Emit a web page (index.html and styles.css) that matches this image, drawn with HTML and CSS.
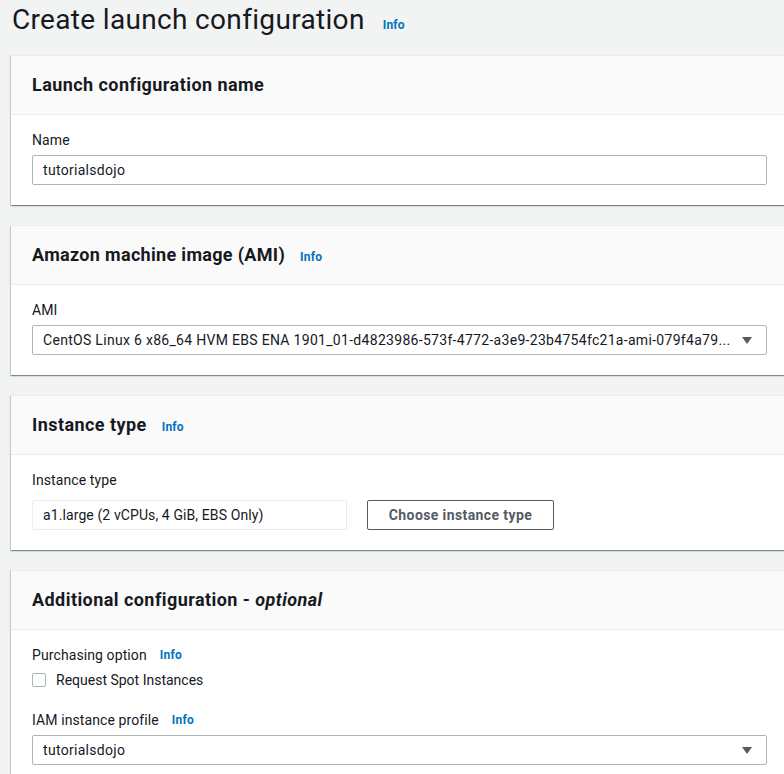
FILE: index.html
```html
<!DOCTYPE html>
<html>
<head>
<meta charset="utf-8">
<link rel="stylesheet" href="styles.css">
</head>
<body>
<div class="page">
  <div class="title-row">
    <h1 class="title">Create launch configuration</h1>
    <a class="info info-title">Info</a>
  </div>

  <section class="card">
    <div class="card-header"><h2 class="card-title">Launch configuration name</h2></div>
    <div class="card-body">
      <div class="label">Name</div>
      <div class="input">tutorialsdojo</div>
    </div>
  </section>

  <section class="card">
    <div class="card-header"><h2 class="card-title card-title-ami">Amazon machine image (AMI)</h2><a class="info">Info</a></div>
    <div class="card-body">
      <div class="label">AMI</div>
      <div class="input select">
        <span class="select-text">CentOS Linux 6 x86_64 HVM EBS ENA 1901_01-d4823986-573f-4772-a3e9-23b4754fc21a-ami-079f4a79...</span>
        <svg class="caret" width="10" height="7" viewBox="0 0 10 7"><path d="M0 0H10L5 7Z" fill="#545b64"/></svg>
      </div>
    </div>
  </section>

  <section class="card">
    <div class="card-header"><h2 class="card-title">Instance type</h2><a class="info">Info</a></div>
    <div class="card-body">
      <div class="label">Instance type</div>
      <div class="row">
        <div class="input readonly">a1.large (2 vCPUs, 4 GiB, EBS Only)</div>
        <button class="btn">Choose instance type</button>
      </div>
    </div>
  </section>

  <section class="card">
    <div class="card-header"><h2 class="card-title">Additional configuration - <i>optional</i></h2></div>
    <div class="card-body">
      <div class="label label-inline">Purchasing option<a class="info">Info</a></div>
      <label class="checkbox-row"><span class="checkbox"></span>Request Spot Instances</label>
      <div class="label label-inline label-iam">IAM instance profile<a class="info">Info</a></div>
      <div class="input select">
        <span class="select-text">tutorialsdojo</span>
        <svg class="caret" width="10" height="7" viewBox="0 0 10 7"><path d="M0 0H10L5 7Z" fill="#545b64"/></svg>
      </div>
    </div>
  </section>
</div>
</body>
</html>
```

FILE: styles.css
```css
html, body {
  margin: 0;
  padding: 0;
  background: #f2f3f3;
  font-family: Roboto, "Open Sans", Arial, sans-serif;
  color: #16191f;
  overflow: hidden;
}

.page {
  padding: 0 0 0 11px;
  width: 776px;
}

.title-row {
  display: flex;
  align-items: baseline;
  height: 55px;
}

.title {
  margin: 0;
  font-size: 28px;
  font-weight: 400;
  line-height: 40px;
  padding-left: 1px;
  letter-spacing: 0.33px;
}

.info {
  color: #0073bb;
  font-size: 12px;
  font-weight: 700;
  margin-left: 11px;
  text-decoration: none;
  letter-spacing: 0.2px;
}

.info-title {
  margin-left: 18px;
}

.card {
  background: #fff;
  border-top: 1px solid #eaeded;
  box-shadow: 0 1px 1px 0 rgba(0, 28, 36, 0.3), 1px 1px 1px 0 rgba(0, 28, 36, 0.15), -1px 1px 1px 0 rgba(0, 28, 36, 0.15);
  margin-bottom: 20px;
  width: 776px;
}

.card-header {
  background: #fafafa;
  border-bottom: 1px solid #eaeded;
  height: 58px;
  padding: 0 21px;
  display: flex;
  align-items: center;
}

.card-title {
  margin: 0;
  font-size: 18px;
  font-weight: 700;
  line-height: 22px;
  letter-spacing: 0.44px;
}

.card-title-ami {
  letter-spacing: 0.32px;
}

.card-header .info {
  margin-left: 15px;
  margin-top: 3px;
}

.card-body {
  padding: 15px 21px 20px;
}

.label {
  font-size: 14px;
  line-height: 20px;
  margin-bottom: 5px;
  letter-spacing: 0.1px;
}

.label-inline {
  display: flex;
  align-items: center;
}

.label-inline .info {
  margin-left: 13px;
}

.label-iam {
  margin-top: 20px;
}

.input {
  box-sizing: border-box;
  height: 30px;
  border: 1px solid #aab7b8;
  border-radius: 2px;
  background: #fff;
  font-size: 14px;
  line-height: 28px;
  padding: 0 10px;
  width: 735px;
  letter-spacing: 0.3px;
}

.select {
  display: flex;
  align-items: center;
  justify-content: space-between;
  padding-right: 14px;
}

.select-text {
  white-space: nowrap;
  overflow: hidden;
}

.caret {
  flex: none;
}

.row {
  display: flex;
  align-items: center;
  gap: 20px;
  margin-top: 10px;
}

.readonly {
  width: 315px;
  border-color: #eaeded;
  letter-spacing: 0.1px;
}

.btn {
  box-sizing: border-box;
  height: 30px;
  width: 187px;
  border: 1px solid #545b64;
  border-radius: 2px;
  background: #fff;
  color: #545b64;
  font-family: inherit;
  font-size: 14px;
  font-weight: 700;
  letter-spacing: 0.4px;
  padding: 0;
}

.checkbox-row {
  display: flex;
  align-items: center;
  font-size: 14px;
  line-height: 20px;
  height: 20px;
  letter-spacing: 0;
}

.checkbox {
  box-sizing: border-box;
  width: 14px;
  height: 14px;
  border: 1px solid #aab7b8;
  border-radius: 2px;
  background: #fff;
  margin-right: 10px;
}
```
